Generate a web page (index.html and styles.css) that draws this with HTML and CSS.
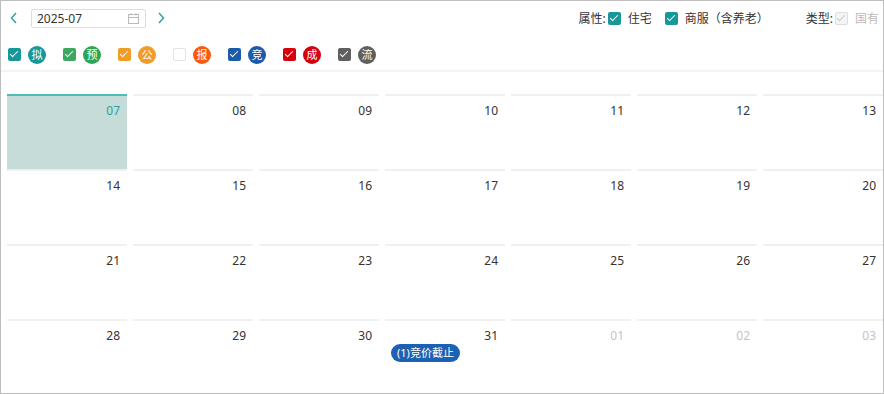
FILE: index.html
```html
<!DOCTYPE html>
<html lang="zh">
<head>
    <meta charset="UTF-8">
    <title>日历</title>
    <link rel="stylesheet" href="styles.css">
</head>
<body>
    <div class="frame">
        <div class="toolbar">
            <div class="month-nav">
                <span class="arrow prev">
                    <svg width="10" height="12" viewBox="0 0 10 12"><path d="M7 1 L2.5 6 L7 11" fill="none" stroke="#2a9fa0" stroke-width="1.4"/></svg>
                </span>
                <div class="date-input">
                    <span>2025-07</span>
                    <svg width="11" height="11" viewBox="0 0 11 11"><rect x="0.5" y="1.5" width="10" height="9" fill="none" stroke="#bbb"/><path d="M0.5 4.5 H10.5 M3 0 V2.5 M8 0 V2.5" stroke="#bbb"/></svg>
                </div>
                <span class="arrow next">
                    <svg width="10" height="12" viewBox="0 0 10 12"><path d="M3 1 L7.5 6 L3 11" fill="none" stroke="#2a9fa0" stroke-width="1.4"/></svg>
                </span>
            </div>
            <div class="props">
                <span class="lbl">属性:</span>
                <span class="cb teal"></span><span class="opt">住宅</span>
                <span class="cb teal gap"></span><span class="opt">商服（含养老）</span>
                <span class="lbl type">类型:</span>
                <span class="cb disabled"></span><span class="opt muted">国有</span>
            </div>
        </div>

        <div class="legend">
            <div class="tag"><span class="cb c-ni"></span><span class="dot c-ni">拟</span></div>
            <div class="tag"><span class="cb c-yu"></span><span class="dot c-yu">预</span></div>
            <div class="tag"><span class="cb c-gong"></span><span class="dot c-gong">公</span></div>
            <div class="tag"><span class="cb off"></span><span class="dot c-bao">报</span></div>
            <div class="tag"><span class="cb c-jing"></span><span class="dot c-jing">竞</span></div>
            <div class="tag"><span class="cb c-cheng"></span><span class="dot c-cheng">成</span></div>
            <div class="tag"><span class="cb c-liu"></span><span class="dot c-liu">流</span></div>
        </div>

        <div class="calendar">
            <div class="day today"><span class="num">07</span></div>
            <div class="day"><span class="num">08</span></div>
            <div class="day"><span class="num">09</span></div>
            <div class="day"><span class="num">10</span></div>
            <div class="day"><span class="num">11</span></div>
            <div class="day"><span class="num">12</span></div>
            <div class="day"><span class="num">13</span></div>

            <div class="day"><span class="num">14</span></div>
            <div class="day"><span class="num">15</span></div>
            <div class="day"><span class="num">16</span></div>
            <div class="day"><span class="num">17</span></div>
            <div class="day"><span class="num">18</span></div>
            <div class="day"><span class="num">19</span></div>
            <div class="day"><span class="num">20</span></div>

            <div class="day"><span class="num">21</span></div>
            <div class="day"><span class="num">22</span></div>
            <div class="day"><span class="num">23</span></div>
            <div class="day"><span class="num">24</span></div>
            <div class="day"><span class="num">25</span></div>
            <div class="day"><span class="num">26</span></div>
            <div class="day"><span class="num">27</span></div>

            <div class="day"><span class="num">28</span></div>
            <div class="day"><span class="num">29</span></div>
            <div class="day"><span class="num">30</span></div>
            <div class="day"><span class="num">31</span><span class="event">(1)竞价截止</span></div>
            <div class="day other"><span class="num">01</span></div>
            <div class="day other"><span class="num">02</span></div>
            <div class="day other"><span class="num">03</span></div>
        </div>
    </div>
</body>
</html>
```

FILE: styles.css
```css
body {
    margin: 0; font-family: "Noto Sans", "Noto Sans CJK SC", sans-serif; color: #333; background: #fff;
}
.frame {
    width: 884px; height: 394px; box-sizing: border-box; border: 1px solid #bdbdbd; overflow: hidden;
}
.toolbar {
    display: flex; justify-content: space-between; align-items: center; height: 18px; margin-top: 8px; padding: 0 0 0 2px;
}
.month-nav {
    display: flex; align-items: center;
}
.arrow {
    display: flex; width: 22px; justify-content: center;
}
.arrow.prev {
    margin-right: 6px;
}
.arrow.next {
    margin-left: 4px;
}
.date-input {
    width: 115px; height: 19px; box-sizing: border-box; border: 1px solid #ddd; border-radius: 2px;
    display: flex; align-items: center; justify-content: space-between; padding: 0 6px 0 5px; font-size: 12px; color: #333;
}
.date-input span {
    line-height: 17px;
}
.props {
    display: flex; align-items: center; font-size: 12px; padding-right: 4px;
}
.lbl {
    margin-right: 2px;
}
.lbl.type {
    margin-left: 37px; margin-right: 2px;
}
.opt {
    margin-left: 7px;
}
.opt.muted {
    color: #bbb;
}
.cb {
    display: inline-block; width: 13px; height: 13px; box-sizing: border-box; border-radius: 2px; position: relative;
}
.cb.gap {
    margin-left: 13px;
}
.cb::after {
    content: ""; position: absolute; left: 4px; top: 1px; width: 3px; height: 7px;
    border: solid #fff; border-width: 0 1.6px 1.6px 0; transform: rotate(45deg);
}
.cb.teal { background: #17979a; }
.cb.disabled { background: #f5f5f5; border: 1px solid #ddd; }
.cb.disabled::after { border-color: #c8c8c8; left: 3.5px; top: 0.5px; }
.cb.off { background: #fff; border: 1px solid #e4e4e4; }
.cb.off::after { display: none; }

.legend {
    display: flex; align-items: center; height: 27px; margin-top: 14px; padding-left: 7px;
    border-bottom: 2px solid #f4f4f4; padding-bottom: 2px;
}
.tag {
    display: flex; align-items: center; width: 55px;
}
.dot {
    width: 18px; height: 18px; border-radius: 50%; color: #fff; font-size: 11px; line-height: 18px;
    text-align: center; margin-left: 7px;
}
.cb.c-ni, .dot.c-ni { background: #16979a; }
.cb.c-yu { background: #3ba85d; }
.dot.c-yu { background: #2ea455; }
.cb.c-gong, .dot.c-gong { background: #f09c26; }
.dot.c-bao { background: #fa5a0a; }
.cb.c-jing, .dot.c-jing { background: #1a5bac; }
.cb.c-cheng, .dot.c-cheng { background: #d4000e; }
.cb.c-liu, .dot.c-liu { background: #5f5f5f; }

.calendar {
    display: grid; grid-template-columns: repeat(7, 120px); column-gap: 6px; grid-auto-rows: 75px;
    margin-top: 22px; padding-left: 6px;
}
.day {
    border-top: 2px solid #f0f0f0; box-sizing: border-box; padding: 7px 7px 0 6px;
    display: flex; flex-direction: column; align-items: flex-end;
}
.num {
    font-size: 12px; line-height: 16px; color: #333;
}
.day.today {
    background: #c5dcd8; border-top-color: #4fbcbc;
}
.day.today .num {
    color: #2b9fa0;
}
.day.other .num {
    color: #c4c4c4;
}
.event {
    align-self: flex-start; margin-top: 0; background: #1c62b3; color: #fff; font-size: 11px;
    line-height: 18px; height: 18px; padding: 0 6px; border-radius: 9px;
}
```
